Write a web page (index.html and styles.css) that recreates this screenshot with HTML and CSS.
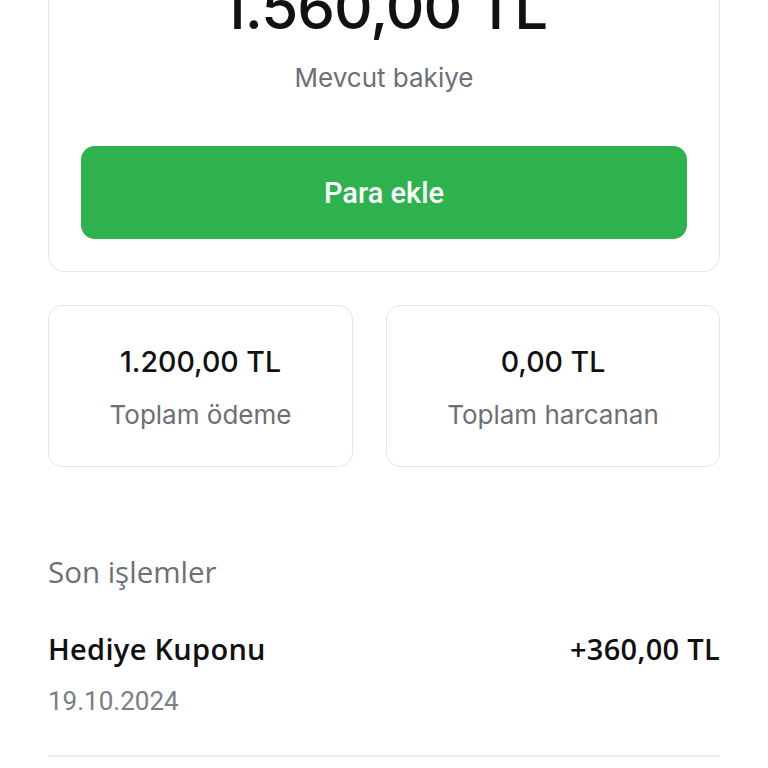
FILE: index.html
```html
<!DOCTYPE html>
<html lang="tr">
<head>
<meta charset="utf-8">
<link rel="stylesheet" href="styles.css">
</head>
<body>
<main class="page">
  <section class="balance-card">
    <div class="balance-amount">1.560,00 TL</div>
    <div class="balance-label">Mevcut bakiye</div>
    <button class="add-btn">Para ekle</button>
  </section>
  <section class="stats">
    <div class="stat-card">
      <div class="stat-value">1.200,00 TL</div>
      <div class="stat-label">Toplam ödeme</div>
    </div>
    <div class="stat-card">
      <div class="stat-value">0,00 TL</div>
      <div class="stat-label">Toplam harcanan</div>
    </div>
  </section>
  <section class="history">
    <h2 class="history-title">Son işlemler</h2>
    <div class="tx">
      <div class="tx-row">
        <span class="tx-name">Hediye Kuponu</span>
        <span class="tx-amount">+360,00 TL</span>
      </div>
      <div class="tx-date">19.10.2024</div>
    </div>
  </section>
</main>
</body>
</html>
```
FILE: styles.css
```css
html, body {
  margin: 0;
  padding: 0;
  background: #ffffff;
  overflow: hidden;
}
body {
  font-family: Inter, "Noto Sans", sans-serif;
  color: #111111;
}
.page {
  padding: 0 48px;
  margin-top: -60px;
}
.balance-card {
  border: 1.5px solid #e6e6e6;
  border-radius: 16px;
  padding: 36px 32px 32px;
  display: flex;
  flex-direction: column;
  align-items: center;
}
.balance-amount {
  font-size: 60px;
  line-height: 60px;
  font-weight: 500;
  letter-spacing: -1px;
  color: #111;
}
.balance-label {
  margin-top: 26px;
  font-size: 26px;
  line-height: 30px;
  color: #6b7078;
}
.add-btn {
  margin-top: 53px;
  width: 100%;
  height: 93px;
  border: none;
  border-radius: 14px;
  background: #2db24e;
  color: #ffffff;
  font-family: Roboto, sans-serif;
  font-size: 29px;
  font-weight: 500;
}
.stats {
  margin-top: 33px;
  display: grid;
  grid-template-columns: 305px 1fr;
  gap: 33px;
}
.stat-card {
  height: 162px;
  box-sizing: border-box;
  border: 1.5px solid #e6e6e6;
  border-radius: 14px;
  display: flex;
  flex-direction: column;
  align-items: center;
  justify-content: center;
  gap: 21px;
  padding-top: 4px;
}
.stat-value {
  font-size: 28.5px;
  line-height: 32px;
  font-weight: 500;
  color: #111;
}
.stat-label {
  font-size: 26px;
  line-height: 32px;
  color: #6b7078;
}
.history {
  margin-top: 88px;
  font-family: "Open Sans", sans-serif;
}
.history-title {
  margin: 0;
  font-size: 29.5px;
  line-height: 34px;
  font-weight: 400;
  color: #6b7078;
}
.tx {
  margin-top: 42px;
  padding-bottom: 38px;
  border-bottom: 2px solid #ececec;
}
.tx-row {
  display: flex;
  justify-content: space-between;
  align-items: center;
}
.tx-name, .tx-amount {
  font-size: 29px;
  line-height: 36px;
  font-weight: 600;
  letter-spacing: 0.3px;
  color: #111;
}
.tx-date {
  margin-top: 18px;
  font-family: Roboto, sans-serif;
  font-size: 26px;
  line-height: 32px;
  color: #7a7e85;
}
```
